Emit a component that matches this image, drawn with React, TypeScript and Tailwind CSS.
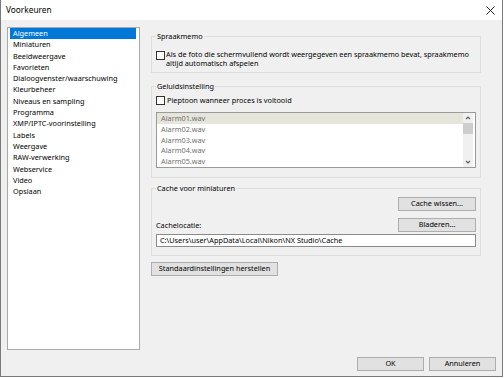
import React from "react";

const items = [
  "Algemeen",
  "Miniaturen",
  "Beeldweergave",
  "Favorieten",
  "Dialoogvenster/waarschuwing",
  "Kleurbeheer",
  "Niveaus en sampling",
  "Programma",
  "XMP/IPTC-voorinstelling",
  "Labels",
  "Weergave",
  "RAW-verwerking",
  "Webservice",
  "Video",
  "Opslaan",
];

const alarms = ["Alarm01.wav", "Alarm02.wav", "Alarm03.wav", "Alarm04.wav", "Alarm05.wav"];

function Checkbox() {
  return <div className="w-[9px] h-[9px] shrink-0 border border-[#333333] bg-white" />;
}

function Button({ children, className = "" }: { children: React.ReactNode; className?: string }) {
  return (
    <div
      className={
        "h-[14px] flex items-center justify-center bg-[#e1e1e1] border border-[#adadad] text-black leading-none " +
        className
      }
    >
      {children}
    </div>
  );
}

export default function App() {
  return (
    <div
      className="w-[504px] h-[378px] bg-white text-[7.3px] text-black"
      style={{ fontFamily: '"Noto Sans", "Open Sans", Arial, sans-serif' }}
    >
      <div className="w-[503px] h-[377px] border-l border-r border-b border-[#7a7a7a] flex flex-col">
        <div className="h-[20px] bg-white flex items-center justify-between pl-[5px] pr-[6px]">
          <span className="text-[8.3px]">Voorkeuren</span>
          <svg width="9" height="9" viewBox="0 0 9 9" className="mr-[1px]">
            <path d="M0.5 0.5 L8.5 8.5 M8.5 0.5 L0.5 8.5" stroke="#222" strokeWidth="1" />
          </svg>
        </div>
        <div className="flex-1 bg-[#f0f0f0] flex flex-col">
          <div className="flex pt-[7px] pl-[6px]">
            <div className="w-[133px] h-[323px] border border-[#a9a9a9] bg-white pl-[2px] pr-[3px]">
              {items.map((it, i) => (
                <div
                  key={it}
                  className={
                    "h-[11.3px] leading-[11.3px] pl-[3px] whitespace-nowrap " +
                    (i === 0 ? "bg-[#0078d7] text-white" : "")
                  }
                >
                  {it}
                </div>
              ))}
            </div>
            <div className="ml-[11px] w-[330px] flex flex-col">
              <fieldset className="mt-[4px] border border-[#dcdcdc] px-[4px] pb-[4px]">
                <legend className="px-[1px] leading-[10px]">Spraakmemo</legend>
                <div className="flex mt-[9px]">
                  <div className="mt-[1px]">
                    <Checkbox />
                  </div>
                  <div className="ml-[1px] leading-[9px] whitespace-nowrap">
                    Als de foto die schermvullend wordt weergegeven een spraakmemo bevat, spraakmemo
                    <br />
                    altijd automatisch afspelen
                  </div>
                </div>
              </fieldset>
              <fieldset className="mt-[8px] border border-[#dcdcdc] px-[4px] pb-[9px]">
                <legend className="px-[1px] leading-[10px]">Geluidsinstelling</legend>
                <div className="flex items-center mt-[5px]">
                  <Checkbox />
                  <span className="ml-[2px] leading-[9px]">Pieptoon wanneer proces is voltooid</span>
                </div>
                <div className="mt-[7px] h-[56px] border border-[#9a9a9a] bg-white flex">
                  <div className="flex-1">
                    {alarms.map((a, i) => (
                      <div
                        key={a}
                        className={
                          "h-[10.75px] leading-[10.75px] pl-[4px] text-[#707070] " +
                          (i === 0 ? "bg-[#e6e5dc]" : "")
                        }
                      >
                        {a}
                      </div>
                    ))}
                  </div>
                  <div className="w-[10px] mr-[2px] bg-[#f0f0f0] flex flex-col items-center">
                    <svg width="10" height="10" viewBox="0 0 10 10">
                      <path d="M3 6 L5 4 L7 6" stroke="#606060" strokeWidth="1.2" fill="none" />
                    </svg>
                    <div className="w-[10px] h-[11px] bg-[#cdcdcd]" />
                    <div className="flex-1" />
                    <svg width="10" height="10" viewBox="0 0 10 10">
                      <path d="M3 4 L5 6 L7 4" stroke="#606060" strokeWidth="1.2" fill="none" />
                    </svg>
                  </div>
                </div>
              </fieldset>
              <fieldset className="mt-[5px] border border-[#dcdcdc] px-[4px] pb-[8px]">
                <legend className="px-[1px] leading-[10px]">Cache voor miniaturen</legend>
                <div className="flex justify-end mt-[4px]">
                  <Button className="w-[78px]">Cache wissen...</Button>
                </div>
                <div className="flex justify-between items-center mt-[7px]">
                  <span>Cachelocatie:</span>
                  <Button className="w-[78px]">Bladeren...</Button>
                </div>
                <div className="mt-[2px] h-[13px] border border-[#8a8a8a] bg-white flex items-center pl-[3px]">
                  C:\Users\user\AppData\Local\Nikon\NX Studio\Cache
                </div>
              </fieldset>
              <Button className="mt-[6px] w-[127px]">Standaardinstellingen herstellen</Button>
            </div>
          </div>
          <div className="flex justify-end mt-[7px] pr-[6px] gap-[5px]">
            <Button className="w-[67px] border-[#0078d7]">OK</Button>
            <Button className="w-[67px]">Annuleren</Button>
          </div>
        </div>
      </div>
    </div>
  );
}
